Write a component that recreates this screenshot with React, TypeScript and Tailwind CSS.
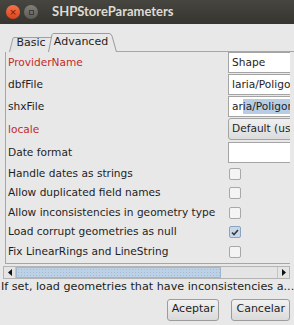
import React from "react";

const rows: { label: string; red?: boolean; kind: "text" | "combo" | "check"; value?: string; checked?: boolean; sel?: boolean }[] = [
  { label: "ProviderName", red: true, kind: "text", value: "Shape" },
  { label: "dbfFile", kind: "text", value: "laria/Poligonos.dbf" },
  { label: "shxFile", kind: "text", value: "aria/Poligonos.shx", sel: true },
  { label: "locale", red: true, kind: "combo", value: "Default (us)" },
  { label: "Date format", kind: "text", value: "" },
  { label: "Handle dates as strings", kind: "check" },
  { label: "Allow duplicated field names", kind: "check" },
  { label: "Allow inconsistencies in geometry type", kind: "check" },
  { label: "Load corrupt geometries as null", kind: "check", checked: true },
  { label: "Fix LinearRings and LineString", kind: "check" },
];

function Field({ r }: { r: (typeof rows)[number] }) {
  if (r.kind === "check") {
    return (
      <div className="flex h-[19.5px] shrink-0 items-center pl-[1px]">
        <div
          className={
            "flex h-[12px] w-[12px] items-center justify-center rounded-[2px] border " +
            (r.checked ? "border-[#8aa4c0] bg-[#c6d8ea]" : "border-[#a8a8a8] bg-[#f4f4f4]")
          }
        >
          {r.checked && (
            <svg width="8" height="7" viewBox="0 0 8 7">
              <path d="M1 3.5 L3 5.5 L7 1" stroke="#3a3a3a" strokeWidth="1.6" fill="none" />
            </svg>
          )}
        </div>
      </div>
    );
  }
  if (r.kind === "combo") {
    return (
      <div className="mb-[2px] flex h-[22px] w-[120px] shrink-0 items-center whitespace-nowrap rounded-[3px] border border-[#a4a4a4] bg-gradient-to-b from-[#f0f0f0] to-[#dcdcdc] pl-[3px] text-[#1e1e1e]">
        {r.value}
      </div>
    );
  }
  return (
    <div className="mb-[1px] flex h-[21px] w-[120px] shrink-0 items-center whitespace-nowrap border border-[#a4a4a4] bg-white pl-[3px] text-[#1e1e1e]">
      {r.sel ? (
        <>
          <span>ar</span>
          <span className="bg-[#b7cde4]">ia/Poligonos.shx</span>
        </>
      ) : (
        r.value
      )}
    </div>
  );
}

export default function App() {
  return (
    <div
      className="flex h-[325px] w-[294px] flex-col overflow-hidden bg-[#e8e8e8] text-[10.6px] text-[#1e1e1e]"
      style={{ fontFamily: '"DejaVu Sans", sans-serif' }}
    >
      {/* title bar */}
      <div className="flex h-[24px] shrink-0 items-center gap-[4px] bg-gradient-to-b from-[#46453f] to-[#36352f] pl-[6px]">
        <div className="flex h-[14px] w-[14px] items-center justify-center rounded-full bg-gradient-to-b from-[#f4744a] to-[#d9431d] text-[9px] leading-none text-[#5a1a08]">
          ×
        </div>
        <div className="flex h-[14px] w-[14px] items-center justify-center rounded-full bg-gradient-to-b from-[#807e78] to-[#5e5c57]">
          <div className="h-[5px] w-[5px] border border-[#3e3d39]" />
        </div>
        <span className="ml-[10px] text-[13px] font-bold text-[#dfdbd2]" style={{ fontFamily: "Lato, sans-serif" }}>
          SHPStoreParameters
        </span>
      </div>

      {/* tabs */}
      <div className="mt-[9px] flex h-[19px] shrink-0 items-end pl-[9px] text-[11px]">
        <div className="relative flex h-[15px] w-[42px] items-end justify-center pb-[1px] pl-[2px]">
          <svg className="absolute left-0 top-0" width="42" height="15" viewBox="0 0 42 15">
            <path d="M0.5 15 L4 1 Q4.5 0.5 6 0.5 L42 0.5" stroke="#a0a0a0" fill="#e3e3e3" />
          </svg>
          <span className="relative">Basic</span>
        </div>
        <div className="relative -ml-[3px] flex h-[19px] w-[69px] items-end justify-center pb-[2px] pr-[3px]">
          <svg className="absolute left-0 top-0" width="69" height="19" viewBox="0 0 69 19">
            <path d="M0.5 19 L4 1.5 Q4.5 0.5 6 0.5 L61 0.5 Q63 0.5 64 3 L68.5 19" stroke="#9a9a9a" fill="#e8e8e8" />
          </svg>
          <span className="relative">Advanced</span>
        </div>
        <div className="h-full flex-1 border-b border-[#a6a6a6]" />
      </div>

      {/* panel */}
      <div className="ml-[5px] flex w-[285px] shrink-0 flex-col overflow-hidden border-b border-l border-[#a6a6a6] pb-[1px]">
        {rows.map((r) => (
          <div key={r.label} className="flex items-center">
            <div className={"w-[222px] shrink-0 whitespace-nowrap pl-[2px] " + (r.red ? "text-[#c42a2a]" : "")}>
              {r.label}
            </div>
            <Field r={r} />
          </div>
        ))}
      </div>

      {/* scrollbar */}
      <div className="ml-[3px] mt-[2px] flex h-[13px] w-[287px] shrink-0 items-stretch border border-[#b4b4b4] bg-[#e4e4e4]">
        <div className="flex w-[12px] items-center justify-center border-r border-[#c4c4c4]">
          <svg width="4" height="7" viewBox="0 0 4 7">
            <path d="M4 0 L0 3.5 L4 7 Z" fill="#111" />
          </svg>
        </div>
        <div
          className="w-[205px] border border-[#9fb6cf] bg-[#bcd0e6]"
          style={{
            backgroundImage: "radial-gradient(#a6bcd6 0.7px, transparent 0.8px)",
            backgroundSize: "3px 3px",
          }}
        />
        <div className="flex-1" />
        <div className="flex w-[12px] items-center justify-center border-l border-[#c4c4c4]">
          <svg width="4" height="7" viewBox="0 0 4 7">
            <path d="M0 0 L4 3.5 L0 7 Z" fill="#111" />
          </svg>
        </div>
      </div>

      <div className="shrink-0 whitespace-nowrap pl-[1px] text-[11.2px] leading-[16px]">
        If set, load geometries that have inconsistencies a...
      </div>

      <div className="mt-[4px] flex shrink-0 justify-end gap-[12px] pr-[4px] text-[11px]">
        <button className="h-[22px] rounded-[3px] border border-[#9c9c9c] bg-gradient-to-b from-[#f2f2f2] to-[#dadada] px-[4px]">
          Aceptar
        </button>
        <button className="h-[22px] rounded-[3px] border border-[#9c9c9c] bg-gradient-to-b from-[#f2f2f2] to-[#dadada] px-[4px]">
          Cancelar
        </button>
      </div>
    </div>
  );
}
